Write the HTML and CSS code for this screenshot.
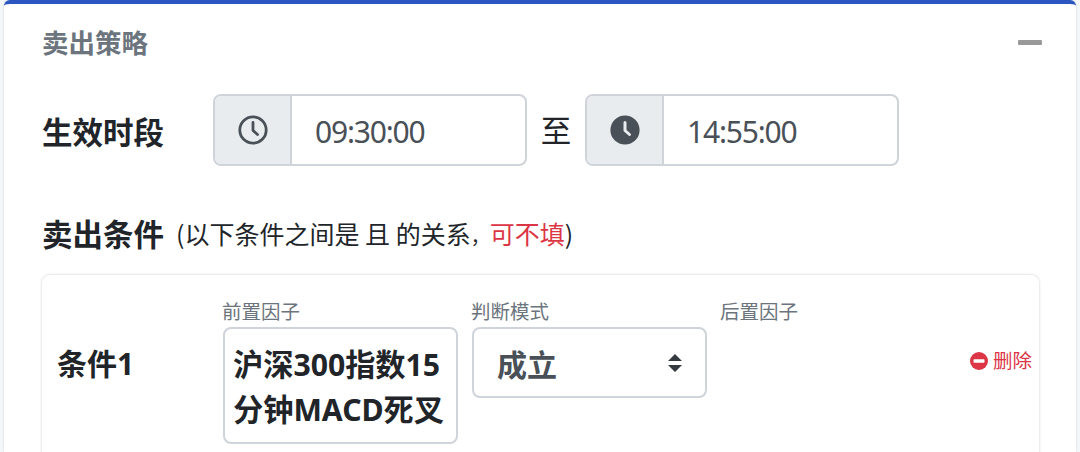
FILE: index.html
```html
<!DOCTYPE html>
<html lang="zh">
<head>
<meta charset="utf-8">
<title>卖出策略</title>
<link rel="stylesheet" href="styles.css">
</head>
<body>
<section class="card">
  <header class="card-head">
    <h2 class="card-title">卖出策略</h2>
    <span class="collapse-icon"></span>
  </header>
  <div class="card-body">
    <div class="time-row">
      <span class="heading time-label">生效时段</span>
      <div class="input-group">
        <span class="addon">
          <svg class="clock" viewBox="0 0 30 30"><circle cx="15" cy="15" r="13.2" fill="none" stroke="#495057" stroke-width="2.8"/><path d="M15 7.5V15.5L19.5 19.5" fill="none" stroke="#495057" stroke-width="2.8" stroke-linecap="round" stroke-linejoin="round"/></svg>
        </span>
        <span class="time-value">09:30:00</span>
      </div>
      <span class="to">至</span>
      <div class="input-group">
        <span class="addon">
          <svg class="clock" viewBox="0 0 30 30"><circle cx="15" cy="15" r="14.6" fill="#495057"/><path d="M15 7.5V15.5L19.5 19.5" fill="none" stroke="#e9ecef" stroke-width="3" stroke-linecap="round" stroke-linejoin="round"/></svg>
        </span>
        <span class="time-value">14:55:00</span>
      </div>
    </div>
    <div class="cond-title">
      <span class="heading">卖出条件</span>
      <span class="note">(以下条件之间是 且 的关系<span class="comma">&#xFF0C;</span><em class="danger">可不填</em>)</span>
    </div>
    <div class="cond-card">
      <div class="cond-name">条件1</div>
      <div class="field">
        <label class="field-label">前置因子</label>
        <div class="factor">沪深300指数15分钟MACD死叉</div>
      </div>
      <div class="field">
        <label class="field-label">判断模式</label>
        <div class="select">
          <span>成立</span>
          <svg class="updown" viewBox="0 0 16 20"><path d="M8 1L15 8H1Z M8 19L1 12H15Z" fill="#343a40"/></svg>
        </div>
      </div>
      <div class="field field-after">
        <label class="field-label">后置因子</label>
      </div>
      <a class="delete">
        <svg class="del-icon" viewBox="0 0 18 18"><circle cx="9" cy="9" r="9" fill="#dc3545"/><rect x="3.5" y="7.2" width="11" height="3.6" rx=".8" fill="#fff"/></svg>
        <span>删除</span>
      </a>
    </div>
  </div>
</section>
</body>
</html>
```
FILE: styles.css
```css
* { box-sizing: border-box; }
html, body { height: 452px; overflow: hidden; }
body {
  margin: 0;
  padding: 0 4px;
  background: #f4f6f9;
  font-family: "Noto Sans", "Noto Sans CJK SC", sans-serif;
  color: #212529;
}
.card {
  height: 452px;
  overflow: hidden;
  background: #fff;
  border-top: 4px solid #2b55c1;
  border-radius: 6px 6px 0 0;
  box-shadow: 0 0 2px rgba(0, 0, 0, .2);
}
.card-head {
  display: flex;
  align-items: center;
  justify-content: space-between;
  height: 78px;
  padding: 0 34px 1px 38px;
}
.card-title {
  margin: 0;
  font-size: 26.5px;
  line-height: 36px;
  font-weight: 700;
  color: #6c757d;
}
.collapse-icon {
  width: 24px;
  height: 5px;
  border-radius: 1px;
  background: #999;
}
.card-body { padding: 12px 36px 0 37px; }
.heading {
  font-size: 30.5px;
  line-height: 40px;
  font-weight: 700;
}
.time-row {
  display: flex;
  align-items: center;
  height: 72px;
}
.time-label {
  width: 172px;
  padding: 3px 0 0 1px;
}
.input-group {
  display: flex;
  width: 314px;
  height: 72px;
  background: #fff;
  border: 2px solid #ced4da;
  border-radius: 8px;
  overflow: hidden;
}
.addon {
  display: flex;
  align-items: center;
  justify-content: center;
  width: 77px;
  background: #e9ecef;
  border-right: 2px solid #ced4da;
}
.clock { width: 30px; height: 30px; }
.time-value {
  padding-left: 23px;
  font-size: 30px;
  letter-spacing: -1.2px;
  line-height: 68px;
  padding-top: 2px;
  color: #495057;
}
.to {
  width: 58px;
  text-align: center;
  font-size: 30.5px;
  line-height: 40px;
}
.cond-title {
  display: flex;
  align-items: center;
  gap: 12px;
  height: 40px;
  margin-top: 48px;
  padding-left: 1px;
}
.note {
  font-family: "Noto Sans CJK SC", sans-serif;
  font-size: 25px;
  line-height: 30px;
}
.comma { font-size: 19px; }
.danger {
  font-style: normal;
  color: #dc3545;
}
.cond-card {
  display: flex;
  align-items: flex-start;
  height: 300px;
  margin: 21px 1px 0;
  padding: 23px 7px 0 15px;
  border-radius: 8px;
  box-shadow: 0 0 3px rgba(0, 0, 0, .2);
}
.cond-name {
  width: 166px;
  margin-top: 46px;
  font-size: 30px;
  line-height: 40px;
  font-weight: 700;
}
.field {
  display: flex;
  flex-direction: column;
  width: 235px;
  margin-right: 14px;
}
.field-after { width: 249px; margin-right: 0; }
.field-label {
  margin-left: -1px;
  padding-bottom: 2px;
  font-size: 19.5px;
  line-height: 27px;
  color: #6c757d;
}
.factor {
  height: 117px;
  padding: 13px 4px 0 8px;
  border: 2px solid #ced4da;
  border-radius: 8px;
  font-size: 30.2px;
  line-height: 45px;
  font-weight: 700;
}
.select {
  display: flex;
  align-items: center;
  justify-content: space-between;
  height: 71px;
  padding: 0 22px 0 23px;
  border: 2px solid #ced4da;
  border-radius: 8px;
  font-size: 30px;
  font-weight: 700;
  color: #495057;
}
.updown { width: 16px; height: 20px; }
.delete {
  display: flex;
  align-items: center;
  gap: 5px;
  margin-top: 48px;
  font-size: 19.5px;
  line-height: 30px;
  color: #dc3545;
}
.del-icon { width: 18px; height: 18px; }
```
